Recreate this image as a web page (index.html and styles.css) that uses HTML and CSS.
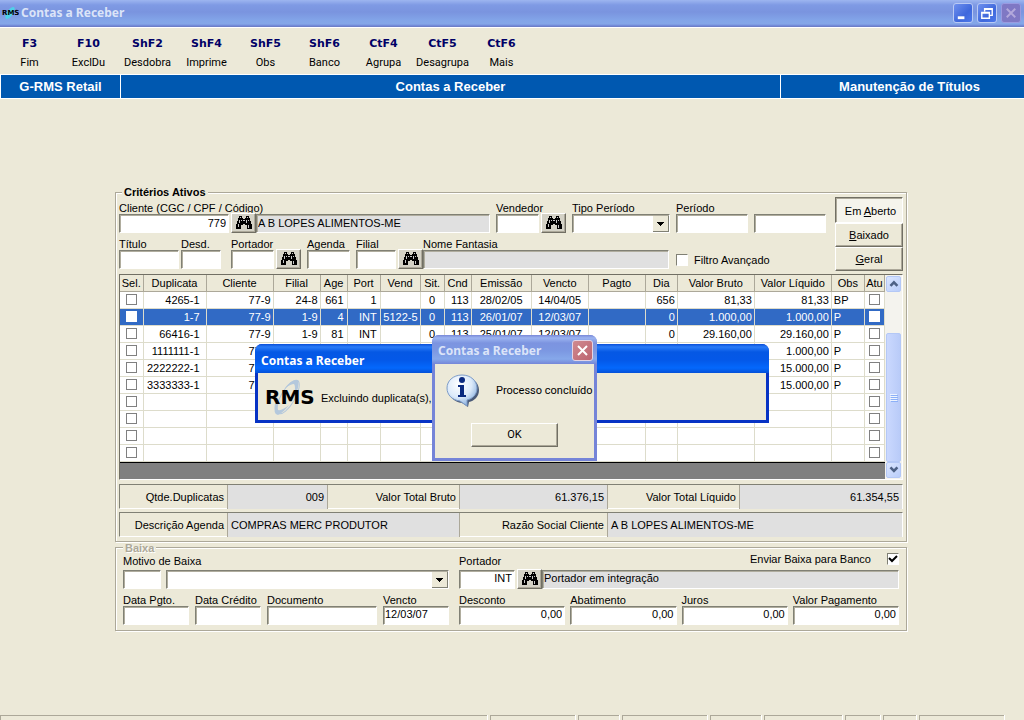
FILE: index.html
```html
<!DOCTYPE html>
<html lang="pt-BR">
<head>
<meta charset="utf-8">
<title>Contas a Receber</title>
<link rel="stylesheet" href="styles.css">
</head>
<body>
<svg class="defs" aria-hidden="true">
  <symbol id="binoculars" viewBox="0 0 16 14">
    <path d="M3 0h3v2h1v1h2V2h1V0h3v2h1v3h1v3h1v5h-5V9H9V8H7v1H5v4H0V8h1V5h1V2h1z" fill="#000"/>
    <path d="M4 1h1v1H4zM11 1h1v1h-1zM3 4h1v3H3zM5 4h1v1H5zM10 4h1v3h-1zM12 4h1v1h-1zM2 8h1v3H2zM12 9h1v3h-1zM7 4h2v1H7z" fill="#c8c8c8"/>
  </symbol>
</svg>
<div class="window">
  <header class="titlebar">
    <svg class="app-icon" viewBox="0 0 18 16" aria-hidden="true">
      <ellipse cx="9" cy="8" rx="3" ry="7" fill="#4fd0e8" transform="rotate(35 9 8)"/>
      <text x="1" y="10" class="icon-text">RMS</text>
    </svg>
    <h1 class="title">Contas a Receber</h1>
    <div class="controls">
      <button class="control" aria-label="Minimizar"><svg viewBox="0 0 19 19"><path d="M4 13h7v3H4z" fill="#fff"/></svg></button>
      <button class="control" aria-label="Restaurar"><svg viewBox="0 0 19 19"><path d="M7 8V5h8v7h-3M7 5.500h8M4 9h8v6H4zM4 9.500h8" fill="none" stroke="#fff" stroke-width="1.500"/></svg></button>
      <button class="control control-off" aria-label="Fechar" disabled><svg viewBox="0 0 19 19"><path d="M5 5l9 9M14 5l-9 9" stroke="#b3a9dc" stroke-width="2"/></svg></button>
    </div>
  </header>

  <nav class="toolbar">
    <button class="tool"><b>F3</b><span>Fim</span></button>
    <button class="tool"><b>F10</b><span>ExclDu</span></button>
    <button class="tool"><b>ShF2</b><span>Desdobra</span></button>
    <button class="tool"><b>ShF4</b><span>Imprime</span></button>
    <button class="tool"><b>ShF5</b><span>Obs</span></button>
    <button class="tool"><b>ShF6</b><span>Banco</span></button>
    <button class="tool"><b>CtF4</b><span>Agrupa</span></button>
    <button class="tool"><b>CtF5</b><span>Desagrupa</span></button>
    <button class="tool"><b>CtF6</b><span>Mais</span></button>
  </nav>

  <div class="banner">
    <div class="banner-cell">G-RMS Retail</div>
    <div class="banner-cell">Contas a Receber</div>
    <div class="banner-cell">Manutenção de Títulos</div>
  </div>

  <main class="content">
    <fieldset class="group">
      <legend>Critérios Ativos</legend>
      <div class="criteria">
        <div class="criteria-rows">
          <div class="row">
            <div class="lookup grow">
              <div class="field w110"><label for="cliente">Cliente (CGC / CPF / Código)</label><input id="cliente" class="num" value="779"></div>
              <button class="find" aria-label="Procurar cliente"><svg><use href="#binoculars"/></svg></button>
              <div class="field grow joined"><input class="readonly" aria-label="Nome do cliente" value="A B LOPES ALIMENTOS-ME" readonly></div>
            </div>
            <div class="lookup">
              <div class="field w43"><label for="vendedor">Vendedor</label><input id="vendedor"></div>
              <button class="find" aria-label="Procurar vendedor"><svg><use href="#binoculars"/></svg></button>
            </div>
            <div class="field w98"><label for="tipo">Tipo Período</label><select id="tipo"><option></option></select></div>
            <div class="field w72"><label for="periodo">Período</label><input id="periodo"></div>
            <div class="field w72"><input aria-label="Período final"></div>
          </div>
          <div class="row">
            <div class="lookup pair">
              <div class="field w60"><label for="titulo">Título</label><input id="titulo"></div>
              <div class="field w40"><label for="desd">Desd.</label><input id="desd"></div>
            </div>
            <div class="lookup">
              <div class="field w43"><label for="portador">Portador</label><input id="portador"></div>
              <button class="find" aria-label="Procurar portador"><svg><use href="#binoculars"/></svg></button>
            </div>
            <div class="field w43"><label for="agenda">Agenda</label><input id="agenda"></div>
            <div class="lookup grow">
              <div class="field w40"><label for="filial">Filial</label><input id="filial"></div>
              <button class="find" aria-label="Procurar filial"><svg><use href="#binoculars"/></svg></button>
              <div class="field grow joined"><label for="fantasia">Nome Fantasia</label><input id="fantasia" class="readonly" readonly></div>
            </div>
            <label class="check filter"><input type="checkbox">Filtro Avançado</label>
          </div>
        </div>
        <div class="modes">
          <button class="mode mode-on" aria-pressed="true"><span>Em <u>A</u>berto</span></button>
          <button class="mode"><span><u>B</u>aixado</span></button>
          <button class="mode"><span><u>G</u>eral</span></button>
        </div>
      </div>

      <div class="grid">
        <div class="grid-body">
          <table class="titles">
            <colgroup><col class="c23"><col class="c63"><col class="c67"><col class="c47"><col class="c27"><col class="c33"><col class="c40"><col class="c24"><col class="c27"><col class="c60"><col class="c57"><col class="c57"><col class="c32"><col class="c77"><col class="c77"><col class="c33"><col class="c20"></colgroup>
            <thead>
              <tr><th>Sel.</th><th>Duplicata</th><th>Cliente</th><th>Filial</th><th>Age</th><th>Port</th><th>Vend</th><th>Sit.</th><th>Cnd</th><th>Emissão</th><th>Vencto</th><th>Pagto</th><th>Dia</th><th>Valor Bruto</th><th>Valor Líquido</th><th>Obs</th><th>Atu</th></tr>
            </thead>
            <tbody>
              <tr><td><input type="checkbox" aria-label="Sel."></td><td>4265-1</td><td>77-9</td><td>24-8</td><td>661</td><td>1</td><td></td><td>0</td><td>113</td><td>28/02/05</td><td>14/04/05</td><td></td><td>656</td><td>81,33</td><td>81,33</td><td>BP</td><td><input type="checkbox" aria-label="Atu"></td></tr>
              <tr class="selected"><td><input type="checkbox" aria-label="Sel."></td><td>1-7</td><td>77-9</td><td>1-9</td><td>4</td><td>INT</td><td>5122-5</td><td>0</td><td>113</td><td>26/01/07</td><td>12/03/07</td><td></td><td>0</td><td>1.000,00</td><td>1.000,00</td><td>P</td><td><input type="checkbox" aria-label="Atu"></td></tr>
              <tr><td><input type="checkbox" aria-label="Sel."></td><td>66416-1</td><td>77-9</td><td>1-9</td><td>81</td><td>INT</td><td></td><td>0</td><td>113</td><td>25/01/07</td><td>12/03/07</td><td></td><td>0</td><td>29.160,00</td><td>29.160,00</td><td>P</td><td><input type="checkbox" aria-label="Atu"></td></tr>
              <tr><td><input type="checkbox" aria-label="Sel."></td><td>1111111-1</td><td>77-9</td><td></td><td></td><td></td><td></td><td></td><td></td><td></td><td></td><td></td><td></td><td></td><td>1.000,00</td><td>P</td><td><input type="checkbox" aria-label="Atu"></td></tr>
              <tr><td><input type="checkbox" aria-label="Sel."></td><td>2222222-1</td><td>77-9</td><td></td><td></td><td></td><td></td><td></td><td></td><td></td><td></td><td></td><td></td><td></td><td>15.000,00</td><td>P</td><td><input type="checkbox" aria-label="Atu"></td></tr>
              <tr><td><input type="checkbox" aria-label="Sel."></td><td>3333333-1</td><td>77-9</td><td></td><td></td><td></td><td></td><td></td><td></td><td></td><td></td><td></td><td></td><td></td><td>15.000,00</td><td>P</td><td><input type="checkbox" aria-label="Atu"></td></tr>
              <tr><td><input type="checkbox" aria-label="Sel."></td><td></td><td></td><td></td><td></td><td></td><td></td><td></td><td></td><td></td><td></td><td></td><td></td><td></td><td></td><td></td><td><input type="checkbox" aria-label="Atu"></td></tr>
              <tr><td><input type="checkbox" aria-label="Sel."></td><td></td><td></td><td></td><td></td><td></td><td></td><td></td><td></td><td></td><td></td><td></td><td></td><td></td><td></td><td></td><td><input type="checkbox" aria-label="Atu"></td></tr>
              <tr><td><input type="checkbox" aria-label="Sel."></td><td></td><td></td><td></td><td></td><td></td><td></td><td></td><td></td><td></td><td></td><td></td><td></td><td></td><td></td><td></td><td><input type="checkbox" aria-label="Atu"></td></tr>
              <tr><td><input type="checkbox" aria-label="Sel."></td><td></td><td></td><td></td><td></td><td></td><td></td><td></td><td></td><td></td><td></td><td></td><td></td><td></td><td></td><td></td><td><input type="checkbox" aria-label="Atu"></td></tr>
            </tbody>
          </table>
          <div class="grid-rest"></div>
        </div>
        <div class="scrollbar">
          <button class="arrow" aria-label="Rolar para cima"><svg viewBox="0 0 15 15"><path d="M4 9l4-4 4 4" fill="none" stroke="#4d6185" stroke-width="3"/></svg></button>
          <div class="track"><div class="thumb"><i></i><i></i><i></i><i></i></div></div>
          <button class="arrow" aria-label="Rolar para baixo"><svg viewBox="0 0 15 15"><path d="M4 5l4 4 4-4" fill="none" stroke="#4d6185" stroke-width="3"/></svg></button>
        </div>
      </div>

      <div class="summary totals">
        <span>Qtde.Duplicatas</span><output class="num">009</output>
        <span>Valor Total Bruto</span><output class="num">61.376,15</output>
        <span>Valor Total Líquido</span><output class="num">61.354,55</output>
      </div>
      <div class="summary details">
        <span>Descrição Agenda</span><output>COMPRAS MERC PRODUTOR</output>
        <span>Razão Social Cliente</span><output>A B LOPES ALIMENTOS-ME</output>
      </div>
    </fieldset>

    <fieldset class="group baixa">
      <legend class="dim">Baixa</legend>
      <div class="settle">
        <div class="settle-side">
          <div class="row tight">
            <div class="field w38 high"><label for="motivo">Motivo de Baixa</label><input id="motivo"></div>
            <div class="field grow"><select aria-label="Descrição do motivo"><option></option></select></div>
          </div>
          <div class="row">
            <div class="field w66"><label for="pgto">Data Pgto.</label><input id="pgto"></div>
            <div class="field w66"><label for="credito">Data Crédito</label><input id="credito"></div>
            <div class="field grow"><label for="doc">Documento</label><input id="doc"></div>
            <div class="field w66"><label for="vencto">Vencto</label><input id="vencto" value="12/03/07"></div>
          </div>
        </div>
        <div class="settle-side grow">
          <div class="row">
            <div class="lookup grow">
              <div class="field w56 high"><label for="port2">Portador</label><input id="port2" class="num" value="INT"></div>
              <button class="find" aria-label="Procurar portador da baixa"><svg><use href="#binoculars"/></svg></button>
              <div class="field grow joined send">
                <label class="check bank" for="enviar">Enviar Baixa para Banco<input id="enviar" type="checkbox" checked></label>
                <input class="readonly" aria-label="Nome do portador" value="Portador em integração" readonly>
              </div>
            </div>
          </div>
          <div class="row tight">
            <div class="field grow"><label for="desconto">Desconto</label><input id="desconto" class="num" value="0,00"></div>
            <div class="field grow"><label for="abatimento">Abatimento</label><input id="abatimento" class="num" value="0,00"></div>
            <div class="field grow"><label for="juros">Juros</label><input id="juros" class="num" value="0,00"></div>
            <div class="field grow"><label for="valor">Valor Pagamento</label><input id="valor" class="num" value="0,00"></div>
          </div>
        </div>
      </div>
    </fieldset>
  </main>

  <footer class="statusbar"><i></i><i></i><i></i><i></i><i></i><i></i><i></i><i></i><i></i></footer>

  <section class="dialog progress" role="dialog" aria-labelledby="progress-title">
    <header class="dialog-head"><h2 id="progress-title">Contas a Receber</h2></header>
    <div class="dialog-body progress-body">
      <svg class="logo" viewBox="0 0 50 38" aria-label="RMS">
        <ellipse cx="23" cy="18" rx="7" ry="19" fill="none" stroke="#b4c8dc" stroke-width="1" transform="rotate(30 23 18)"/>
        <path d="M10 24Q8 36 13 36Q19 33 24 26Q17 32 13 31Q12 28 14 23zM20 9Q27 0 33 1Q35 8 29 18Q31 7 29 5Q26 5 20 9z" fill="#b4c8dc"/>
        <text x="0" y="25" class="logo-text">RMS</text>
      </svg>
      <span>Excluindo duplicata(s),</span>
    </div>
  </section>

  <section class="dialog message" role="alertdialog" aria-labelledby="message-title">
    <header class="dialog-head">
      <h2 id="message-title">Contas a Receber</h2>
      <button class="close" aria-label="Fechar"><svg viewBox="0 0 19 19"><path d="M5 5l9 9M14 5l-9 9" stroke="#fff" stroke-width="2"/></svg></button>
    </header>
    <div class="dialog-body message-body">
      <div class="message-line">
        <svg class="info" viewBox="0 0 34 34" aria-hidden="true">
          <defs><radialGradient id="bubble" cx="40%" cy="30%" r="70%"><stop offset="0" stop-color="#fff"/><stop offset="60%" stop-color="#dceafa"/><stop offset="100%" stop-color="#8fb4e0"/></radialGradient></defs>
          <path d="M18 3C27 3 33 9 33 16C33 23 28 27 23 28L22 33L16 29C8 28 3 23 3 16z" fill="#4a5a78"/>
          <path d="M16 1C25 1 31 7 31 14C31 21 26 25 21 26L21 32L14 27C6 26 1 21 1 14C1 7 7 1 16 1z" fill="url(#bubble)" stroke="#7d9cc8"/>
          <circle cx="16" cy="6" r="3" fill="#0a2a80"/>
          <path d="M12 11h6v10h2v2h-8v-2h2v-8h-2z" fill="#0a2a80"/>
        </svg>
        <p>Processo concluído</p>
      </div>
      <button class="ok">OK</button>
    </div>
  </section>
</div>
</body>
</html>
```

FILE: styles.css
```css
* { box-sizing: border-box; }

body {
  margin: 0;
  background: #ece9d8;
  color: #000;
  font: 11px/12px "Liberation Sans", Arial, sans-serif;
}

button, input, select {
  margin: 0;
  padding: 0;
  border: 0;
  border-radius: 0;
  background: none;
  color: inherit;
  font: inherit;
}

.defs { display: none; }

.window {
  position: relative;
  display: flex;
  flex-direction: column;
  min-height: 100vh;
  overflow: hidden;
}

/* Title bar */
.titlebar {
  display: flex;
  align-items: center;
  gap: 2px;
  height: 27px;
  padding: 0 3px 0 1px;
  border-bottom: 1px solid #6d7fc8;
  background: linear-gradient(#9db5f0 0, #7f9ae4 5px, #7a94df 12px, #82a4e8 20px, #84a6e8 24px, #6d82d4 100%);
}
.app-icon { width: 18px; height: 16px; }
.icon-text { font: bold 7px "DejaVu Sans", sans-serif; }
.title {
  flex: 1;
  margin: 0;
  color: #dbe4f8;
  font: bold 12px/16px "Noto Sans", sans-serif;
}
.controls { display: flex; gap: 4px; }
.control {
  width: 20px;
  height: 20px;
  border: 1px solid #b9c9f4;
  border-radius: 3px;
  background: linear-gradient(135deg, #6f90ee, #3f68dc 60%, #4d78ea);
}
.control svg { display: block; width: 100%; }
.control-off { border-color: #9a9ae0; background: #7f78c4; }

/* Function keys */
.toolbar {
  display: flex;
  height: 47px;
  padding-top: 10px;
  border-top: 1px solid #fff;
}
.tool {
  display: flex;
  flex-direction: column;
  align-items: center;
  gap: 7px;
  width: 59px;
}
.tool b { color: #000066; font: bold 11px/12px "DejaVu Sans", sans-serif; }
.tool span { font: 11px/12px Roboto, sans-serif; }

.banner {
  display: grid;
  grid-template-columns: 121px 1fr 243px;
  height: 25px;
  border: solid #fff;
  border-width: 1px 0;
  background: #0058b0;
  color: #fff;
  font-size: 13px;
  font-weight: bold;
  line-height: 24px;
  text-align: center;
}
.banner-cell { border-right: 1px solid #fff; }
.banner-cell:first-child { border-left: 1px solid #fff; }
.banner-cell:last-child { border-right: 0; padding-left: 14px; }

/* Groups */
.content {
  flex: 1;
  padding: 88px 117px 12px 115px;
}
.group {
  min-width: 0;
  margin: 0;
  padding: 0 3px 4px;
  border: 1px solid #aca899;
  box-shadow: 1px 1px 0 #fff, inset 1px 1px 0 #fff;
}
.group legend {
  height: 10px;
  margin-left: 3px;
  padding: 0 2px;
  background: #ece9d8;
  font-weight: bold;
  line-height: 10px;
}
.group .dim { color: #aca899; text-shadow: 1px 1px 0 #fff; }
.baixa { margin-top: 1px; padding: 0 7px 5px; }
.baixa legend { margin-left: 0; }

.criteria { display: flex; gap: 9px; }
.criteria-rows {
  display: flex;
  flex: 1;
  flex-direction: column;
  gap: 5px;
  padding-top: 5px;
}
.row { display: flex; align-items: flex-end; gap: 6px; }
.tight { gap: 5px; }
.lookup { display: flex; align-items: flex-end; gap: 2px; }
.pair { padding-right: 4px; }
.field { display: flex; flex-direction: column; min-width: 0; }
.field > label { height: 12px; white-space: nowrap; }
.high > label { height: 15px; }
.joined { margin-left: -2px; }
.grow { flex: 1; }

.field > input, .field > select {
  width: 100%;
  height: 19px;
  padding: 0 1px 2px;
  border: 1px solid;
  border-color: #808074 #fff #fff #808074;
  background: #fff;
  box-shadow: inset 1px 1px 0 #b0ad9e;
}
.field > input.num { padding-right: 2px; }
.field > .readonly { background: #e0e0e0; }
.num { text-align: right; }

.field > select {
  appearance: none;
  background:
    linear-gradient(#000, #000) right 5px top 7px / 7px 1px no-repeat,
    linear-gradient(#000, #000) right 6px top 8px / 5px 1px no-repeat,
    linear-gradient(#000, #000) right 7px top 9px / 3px 1px no-repeat,
    linear-gradient(#000, #000) right 8px top 10px / 1px 1px no-repeat,
    linear-gradient(#ece9d8, #ece9d8) right 1px top 1px / 15px 15px no-repeat,
    linear-gradient(#808074, #808074) right 0 top 1px / 16px 16px no-repeat,
    #fff;
}

.find {
  display: flex;
  align-items: center;
  justify-content: center;
  flex: none;
  width: 25px;
  height: 20px;
  border: 1px solid;
  border-color: #fff #716f64 #716f64 #fff;
  background: #d4d2c6;
  box-shadow: inset -1px -1px 0 #aca899;
}
.find svg { width: 16px; height: 14px; }

.w38 { width: 38px; }
.w40 { width: 40px; }
.w43 { width: 43px; }
.w56 { width: 56px; }
.w60 { width: 60px; }
.w66 { width: 66px; }
.w72 { width: 72px; }
.w98 { width: 98px; }
.w110 { width: 110px; }

.check { display: flex; align-items: center; gap: 6px; }
.filter { width: 151px; height: 19px; padding-left: 1px; }

input[type="checkbox"] {
  appearance: none;
  display: block;
  width: 12px;
  height: 12px;
  border: 1px solid;
  border-color: #808074 #fff #fff #808074;
  background: #fff;
}
.bank { justify-content: flex-end; gap: 16px; }
.send > .bank { height: 17px; align-items: flex-start; }
.bank input[type="checkbox"] {
  background: #fff url("data:image/svg+xml,%3Csvg xmlns='http://www.w3.org/2000/svg' viewBox='0 0 10 10'%3E%3Cpath d='M1 4l3 3 5-5' fill='none' stroke='%23000' stroke-width='2'/%3E%3C/svg%3E");
}

.modes { display: flex; flex-direction: column; width: 68px; height: 74px; }
.mode {
  flex: 1;
  border: 1px solid;
  border-color: #fff #716f64 #716f64 #fff;
  box-shadow: inset -1px -1px 0 #aca899;
}
.mode-on {
  padding: 2px 0 0 3px;
  border-color: #716f64 #fff #fff #716f64;
  background: #f5f4ec;
  box-shadow: inset 1px 1px 0 #aca899;
}

/* Title grid */
.grid {
  display: flex;
  margin-top: 3px;
  border: 1px solid;
  border-color: #716f64 #fff #fff #716f64;
}
.grid-body { display: flex; flex: 1; flex-direction: column; min-width: 0; }
.titles { width: 100%; border-collapse: collapse; table-layout: fixed; }
.titles th, .titles td {
  height: 17px;
  padding: 0 2px;
  border-right: 1px solid #dddccb;
  border-bottom: 1px solid #dddccb;
  background: #fff;
  font-weight: normal;
  line-height: 12px;
  text-align: right;
  white-space: nowrap;
  overflow: hidden;
}
.titles th {
  height: 16px;
  padding: 0;
  border-right-color: #aca899;
  border-bottom-color: #aca899;
  background: #ece9d8;
  text-align: center;
}
.titles td:nth-child(2) { padding-right: 6px; }
.titles td:nth-child(5), .titles td:nth-child(6) { padding-right: 3px; }
.titles td:nth-child(8), .titles td:nth-child(10), .titles td:nth-child(11) { text-align: center; }
.titles td:nth-child(16) { text-align: left; }
.titles .selected td { background: #316ac5; color: #fff; }
.titles input[type="checkbox"] { width: 11px; height: 11px; margin: 0 auto; border-color: #808080; }
.titles td:first-child, .titles td:last-child { padding: 0; }
.titles .selected input[type="checkbox"] { border-color: #fff; }
.grid-rest { height: 17px; border-top: 1px solid #000; background: #808080; }

.c20 { width: 20px; }
.c23 { width: 23px; }
.c24 { width: 24px; }
.c27 { width: 27px; }
.c32 { width: 32px; }
.c33 { width: 33px; }
.c40 { width: 40px; }
.c47 { width: 47px; }
.c57 { width: 57px; }
.c60 { width: 60px; }
.c63 { width: 63px; }
.c67 { width: 67px; }
.c77 { width: 77px; }

.scrollbar { display: flex; flex-direction: column; width: 17px; padding: 1px; background: #f4f3ee; }
.arrow {
  height: 16px;
  border: 1px solid #b4c8f6;
  border-radius: 2px;
  background: linear-gradient(135deg, #dbe6ff, #b9cdfa);
}
.arrow svg { display: block; width: 100%; }
.track { display: flex; flex: 1; flex-direction: column; justify-content: flex-end; }
.thumb {
  display: flex;
  flex-direction: column;
  align-items: center;
  justify-content: center;
  gap: 1px;
  height: 76%;
  border: 1px solid #b4c8f6;
  border-radius: 2px;
  background: linear-gradient(90deg, #cad8fe, #b9cbf8);
}
.thumb i { width: 7px; height: 1px; background: #eef4fe; box-shadow: 1px 1px 0 #8cb0f8; }

/* Totals */
.summary {
  display: grid;
  height: 25px;
  margin-top: 4px;
  border: 1px solid;
  border-color: #808074 #fff #fff #808074;
  line-height: 24px;
}
.details { margin-top: 3px; }
.totals { grid-template-columns: 108px 100px 132px 148px 132px 1fr; }
.details { grid-template-columns: 108px 232px 148px 1fr; }
.summary span, .summary output {
  padding: 0 3px;
  border-right: 1px solid #aca899;
  white-space: nowrap;
}
.summary span { text-align: right; }
.summary output { background: #e0e0e0; }
.summary output:last-child { border-right: 0; }

/* Settlement */
.settle { display: flex; gap: 10px; }
.settle-side { display: flex; flex-direction: column; justify-content: flex-end; gap: 5px; width: 326px; }
.settle-side.grow { width: auto; }

.statusbar {
  display: grid;
  grid-template-columns: 1fr 85px 41px 85px 51px 78px 35px 33px 85px;
  gap: 3px;
  height: 5px;
  padding-right: 20px;
}
.statusbar i { border: solid #aca899; border-width: 1px 0 0 1px; box-shadow: 1px 0 0 #fff; }

/* Dialogs */
.dialog {
  position: absolute;
  display: flex;
  flex-direction: column;
  border-radius: 7px 7px 0 0;
}
.dialog-head { display: flex; align-items: center; justify-content: space-between; }
.dialog h2 { margin: 0; color: #fff; font: bold 12px/16px "Noto Sans", sans-serif; }
.dialog-body { flex: 1; background: #ece9d8; }

.progress {
  left: 255px;
  top: 344px;
  width: 514px;
  height: 79px;
  padding: 0 3px 3px;
  background: #0733c4;
}
.progress .dialog-head {
  height: 29px;
  margin: 0 -3px;
  padding: 4px 6px 0;
  border-radius: 7px 7px 0 0;
  background: linear-gradient(#0a4fd8 0, #2a7cf8 3px, #0558e4 8px, #0458e8 16px, #0468fc 24px, #0450d8 100%);
}
.progress-body { display: flex; align-items: center; gap: 6px; padding: 3px 7px 0; }
.logo { width: 50px; height: 38px; overflow: visible; }
.logo-text { font: bold 20px "DejaVu Sans", sans-serif; }

.message {
  left: 432px;
  top: 335px;
  width: 165px;
  height: 126px;
  padding: 0 3px 3px;
  background: #7584d8;
}
.message .dialog-head {
  height: 29px;
  margin: 0 -3px;
  padding: 2px 4px 0 6px;
  border-radius: 7px 7px 0 0;
  background: linear-gradient(#7888d8 0, #9cb4f0 3px, #7c94e0 8px, #7c98e2 16px, #86a8ea 24px, #7486d8 100%);
}
.message h2 { color: #dbe4f8; }
.close {
  width: 21px;
  height: 21px;
  border: 1px solid #e4d4e4;
  border-radius: 3px;
  background: linear-gradient(135deg, #d08a90, #bc6470);
}
.close svg { display: block; width: 100%; }
.message-body {
  display: flex;
  flex-direction: column;
  align-items: center;
  gap: 15px;
  padding-top: 10px;
  font-family: Roboto, sans-serif;
}
.message-line { display: flex; align-items: center; gap: 16px; width: 100%; padding-left: 11px; }
.message-line p { margin: 0; white-space: nowrap; }
.info { flex: none; width: 34px; height: 34px; }
.ok {
  width: 87px;
  height: 24px;
  border: 1px solid;
  border-color: #fff #716f64 #716f64 #fff;
  box-shadow: inset -1px -1px 0 #aca899;
}
```
